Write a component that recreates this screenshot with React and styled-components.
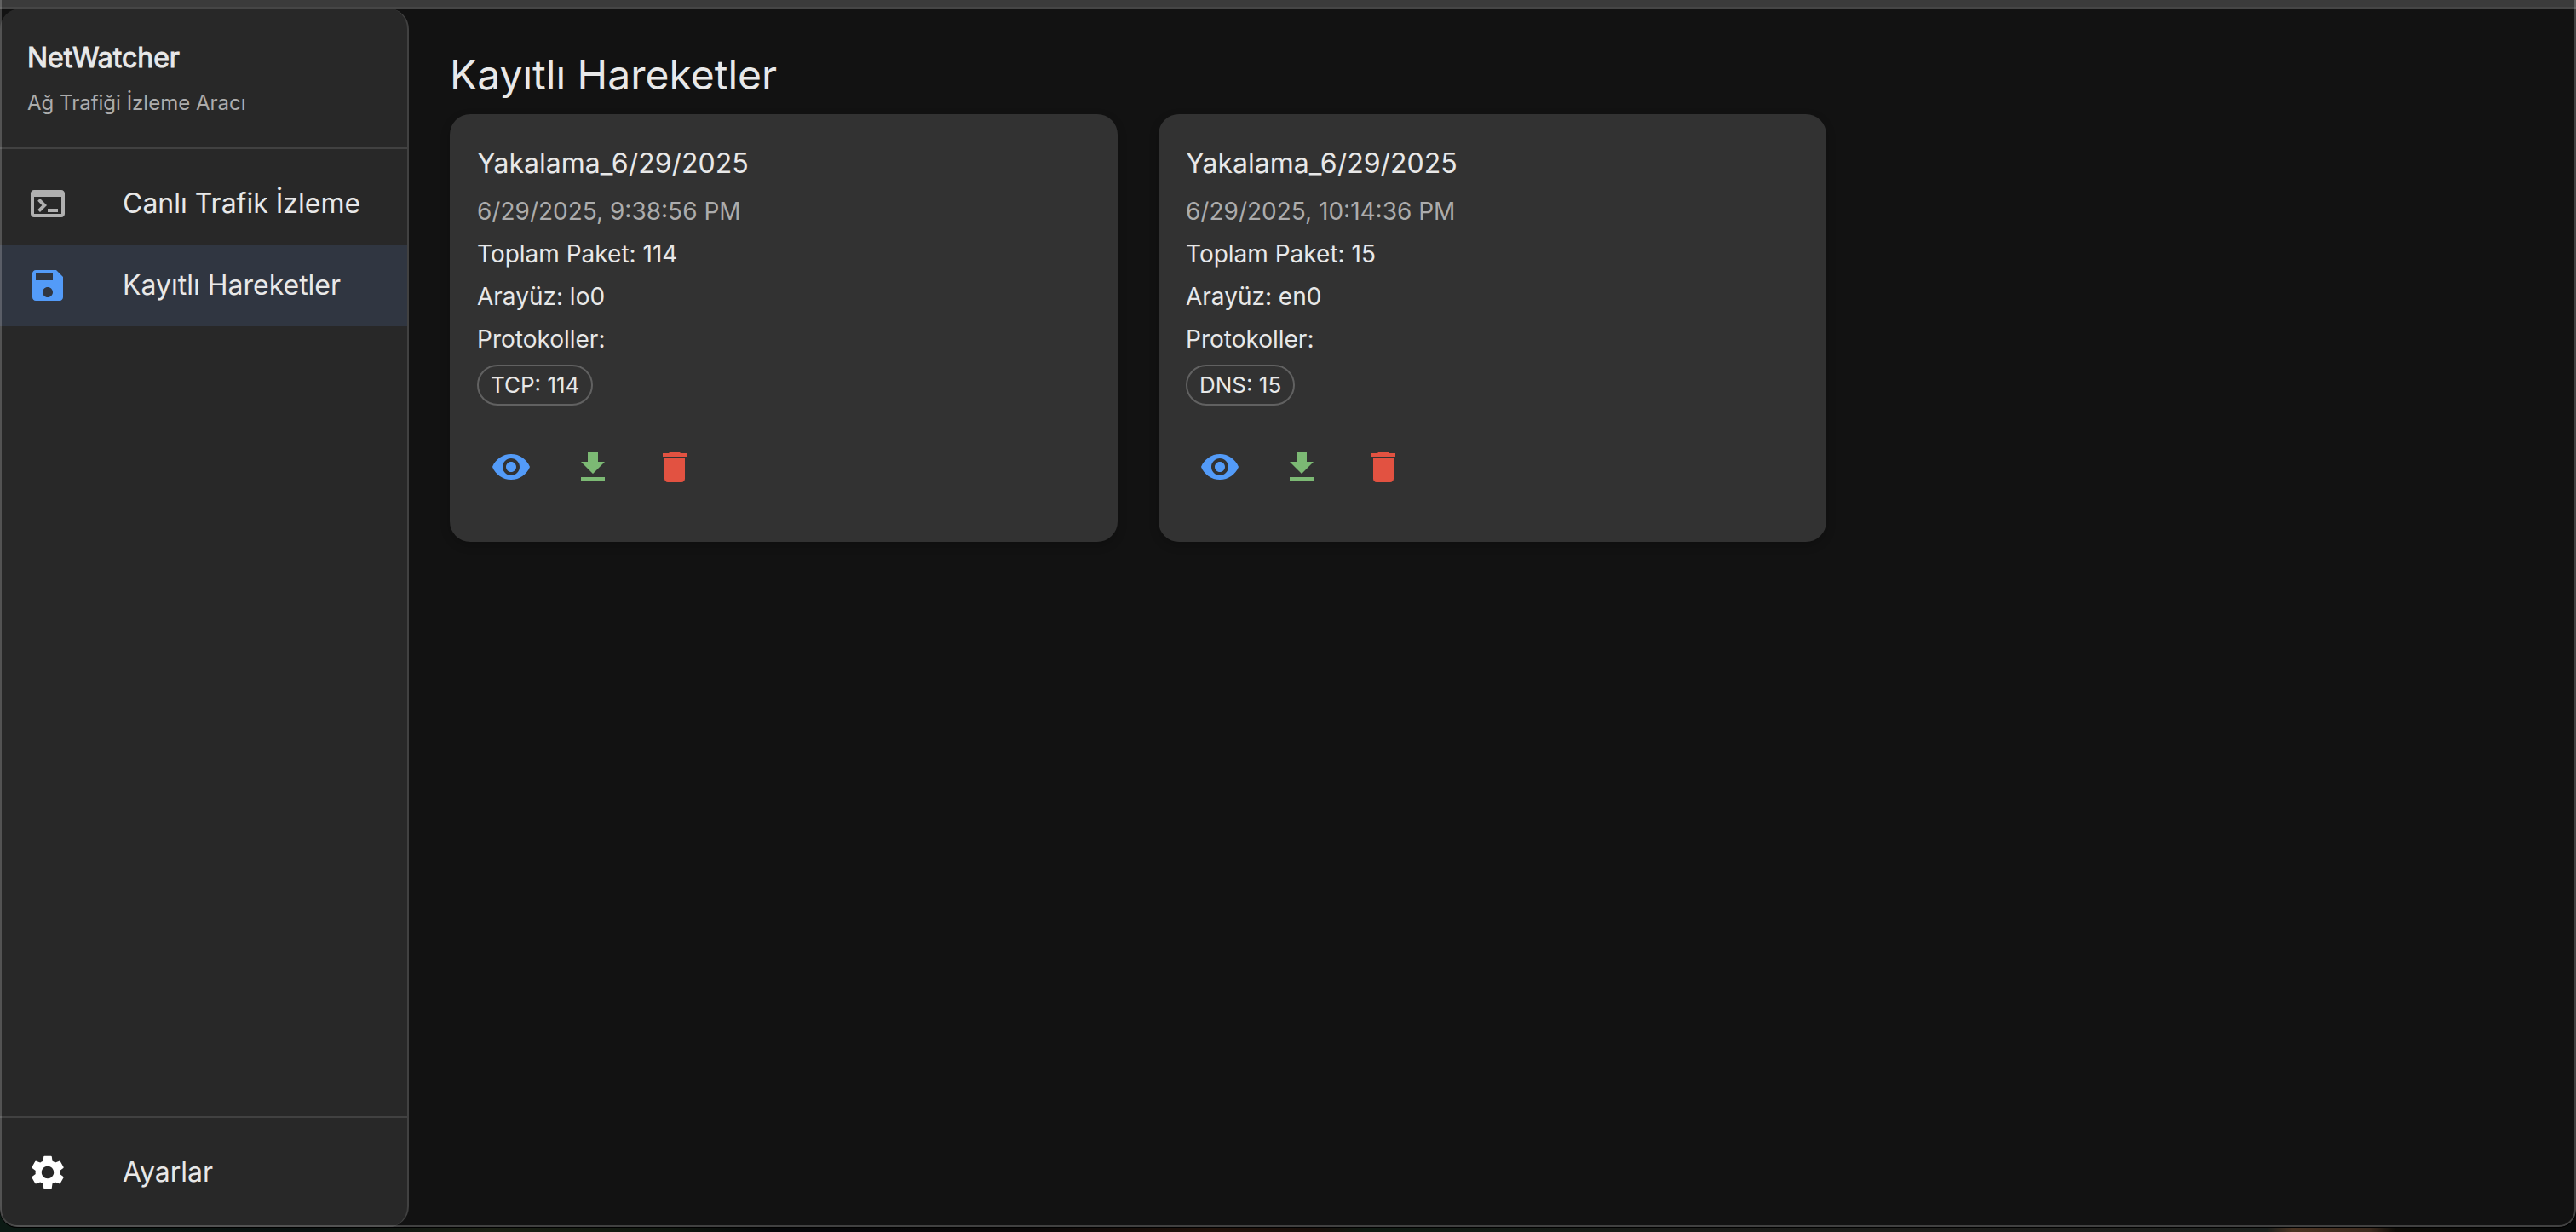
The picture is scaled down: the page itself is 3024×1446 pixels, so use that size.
import React from "react";
import styled, { createGlobalStyle } from "styled-components";

const GlobalStyle = createGlobalStyle`
  * { box-sizing: border-box; }
  body {
    margin: 0;
    background: #0b100e;
    color: #e8e8e8;
    font-family: Inter, "Liberation Sans", sans-serif;
  }
  h1, h2, p, ul { margin: 0; padding: 0; font-weight: 400; }
`;

const Desktop = styled.div`
  height: 100vh;
  padding-bottom: 6px;
  overflow: hidden;
  background: linear-gradient(
    90deg,
    #0c1a14 0%,
    #0a1110 12%,
    #1b2014 19%,
    #10170f 26%,
    #060709 30%,
    #0b0808 40%,
    #22120a 47%,
    #1a0f0a 51%,
    #0f1a12 53%,
    #1a1b18 65%,
    #1d1d1a 80%,
    #1c201d 88%,
    #4a3322 89%,
    #3c2a1e 92%,
    #0e0c07 93%,
    #080a0a 100%
  );
`;

const Window = styled.div`
  height: 100%;
  display: flex;
  flex-direction: column;
  position: relative;
  background: #121212;
  border-radius: 0 0 20px 20px;
  box-shadow: 0 1px 0 #000000;
  overflow: hidden;
  &::after {
    content: "";
    position: absolute;
    inset: 0;
    border: 2px solid rgba(255, 255, 255, 0.2);
    border-top: 0;
    border-radius: inherit;
    pointer-events: none;
  }
`;

const TitleBar = styled.div`
  flex: none;
  height: 10px;
  background: #3b3b3b;
  border-bottom: 2px solid #464646;
`;

const Body = styled.div`
  flex: 1;
  min-height: 0;
  display: flex;
`;

const Sidebar = styled.aside`
  flex: none;
  width: 480px;
  display: flex;
  flex-direction: column;
  background: #282828;
  border-right: 2px solid #414141;
  border-radius: 24px;
`;

const Brand = styled.header`
  padding: 32px 32px 32px;
  border-bottom: 2px solid #414141;
`;

const BrandName = styled.h2`
  font-size: 32px;
  line-height: 51px;
  -webkit-text-stroke: 1px currentColor;
`;

const BrandNote = styled.p`
  font-size: 24px;
  line-height: 40px;
  padding-top: 8px;
  color: #acacac;
`;

const Nav = styled.nav`
  flex: 1;
  padding: 16px 0;
`;

const NavFooter = styled.nav`
  padding: 16px 0;
  border-top: 2px solid #414141;
`;

const NavLink = styled.a`
  display: flex;
  align-items: center;
  height: 96px;
  padding: 0 32px;
  font-size: 32px;
  line-height: 48px;
  color: #e8e8e8;
  text-decoration: none;
  white-space: nowrap;
  background: ${(p) => (p.$active ? "#303641" : "transparent")};
  svg {
    flex: none;
    margin-right: 64px;
    color: ${(p) => p.$iconColor};
  }
`;

const Main = styled.main`
  flex: 1;
  min-width: 0;
  padding: 48px;
`;

const PageTitle = styled.h1`
  font-size: 48px;
  line-height: 60px;
  padding-bottom: 16px;
`;

const CardGrid = styled.div`
  display: grid;
  grid-template-columns: repeat(3, 1fr);
  gap: 48px;
`;

const Card = styled.article`
  padding: 32px 32px 48px;
  background: #323232;
  border-radius: 24px;
  box-shadow: 0 4px 12px rgba(0, 0, 0, 0.2);
`;

const CardTitle = styled.h2`
  font-size: 32px;
  line-height: 52px;
  padding-bottom: 5px;
`;

const CardLine = styled.p`
  font-size: 28px;
  line-height: 50px;
  color: ${(p) => (p.$muted ? "#acacac" : "#e8e8e8")};
`;

const Chips = styled.ul`
  display: flex;
  gap: 8px;
  padding-top: 5px;
  list-style: none;
`;

const Chip = styled.li`
  height: 48px;
  padding: 0 14px;
  font-size: 26px;
  line-height: 44px;
  border: 2px solid #616161;
  border-radius: 24px;
`;

const Actions = styled.div`
  display: flex;
  gap: 16px;
  padding-top: 32px;
`;

const IconButton = styled.button`
  display: flex;
  padding: 16px;
  border: 0;
  border-radius: 50%;
  background: none;
  color: ${(p) => p.$color};
  cursor: pointer;
`;

const PATHS = {
  terminal:
    "M20 4H4c-1.11 0-2 .9-2 2v12c0 1.1.89 2 2 2h16c1.1 0 2-.9 2-2V6c0-1.1-.89-2-2-2m0 14H4V8h16zm-2-1h-6v-2h6zM7.5 17l-1.41-1.41L8.67 13l-2.59-2.59L7.5 9l4 4z",
  save: "M17 3H5c-1.11 0-2 .9-2 2v14c0 1.1.89 2 2 2h14c1.1 0 2-.9 2-2V7zm-5 16c-1.66 0-3-1.34-3-3s1.34-3 3-3 3 1.34 3 3-1.34 3-3 3m3-10H5V5h10z",
  settings:
    "M19.14 12.94c.04-.3.06-.61.06-.94 0-.32-.02-.64-.07-.94l2.03-1.58c.18-.14.23-.41.12-.61l-1.92-3.32c-.12-.22-.37-.29-.59-.22l-2.39.96c-.5-.38-1.03-.7-1.62-.94l-.36-2.54c-.04-.24-.24-.41-.48-.41h-3.84c-.24 0-.43.17-.47.41l-.36 2.54c-.59.24-1.13.57-1.62.94l-2.39-.96c-.22-.08-.47 0-.59.22L2.74 8.87c-.12.21-.08.47.12.61l2.03 1.58c-.05.3-.09.63-.09.94s.02.64.07.94l-2.03 1.58c-.18.14-.23.41-.12.61l1.92 3.32c.12.22.37.29.59.22l2.39-.96c.5.38 1.03.7 1.62.94l.36 2.54c.05.24.24.41.48.41h3.84c.24 0 .44-.17.47-.41l.36-2.54c.59-.24 1.13-.56 1.62-.94l2.39.96c.22.08.47 0 .59-.22l1.92-3.32c.12-.22.07-.47-.12-.61zM12 15.6c-1.98 0-3.6-1.62-3.6-3.6s1.62-3.6 3.6-3.6 3.6 1.62 3.6 3.6-1.62 3.6-3.6 3.6",
  view: "M12 4.5C7 4.5 2.73 7.61 1 12c1.73 4.39 6 7.5 11 7.5s9.27-3.11 11-7.5c-1.73-4.39-6-7.5-11-7.5M12 17c-2.76 0-5-2.24-5-5s2.24-5 5-5 5 2.24 5 5-2.24 5-5 5m0-8c-1.66 0-3 1.34-3 3s1.34 3 3 3 3-1.34 3-3-1.34-3-3-3",
  download: "M19 9h-4V3H9v6H5l7 7zM5 18v2h14v-2z",
  trash:
    "M6 19c0 1.1.9 2 2 2h8c1.1 0 2-.9 2-2V7H6zM19 4h-3.5l-1-1h-5l-1 1H5v2h14z",
};

function Icon({ name }) {
  return (
    <svg width="48" height="48" viewBox="0 0 24 24" fill="currentColor" aria-hidden="true">
      <path d={PATHS[name]} />
    </svg>
  );
}

const captures = [
  {
    id: "lo0",
    name: "Yakalama_6/29/2025",
    date: "6/29/2025, 9:38:56 PM",
    total: 114,
    iface: "lo0",
    protocols: [["TCP", 114]],
  },
  {
    id: "en0",
    name: "Yakalama_6/29/2025",
    date: "6/29/2025, 10:14:36 PM",
    total: 15,
    iface: "en0",
    protocols: [["DNS", 15]],
  },
];

function CaptureCard({ capture }) {
  return (
    <Card>
      <CardTitle>{capture.name}</CardTitle>
      <CardLine $muted>{capture.date}</CardLine>
      <CardLine>{`Toplam Paket: ${capture.total}`}</CardLine>
      <CardLine>{`Arayüz: ${capture.iface}`}</CardLine>
      <CardLine>Protokoller:</CardLine>
      <Chips>
        {capture.protocols.map(([name, count]) => (
          <Chip key={name}>{`${name}: ${count}`}</Chip>
        ))}
      </Chips>
      <Actions>
        <IconButton type="button" $color="#539bf8"><Icon name="view" /></IconButton>
        <IconButton type="button" $color="#7cb974"><Icon name="download" /></IconButton>
        <IconButton type="button" $color="#e25241"><Icon name="trash" /></IconButton>
      </Actions>
    </Card>
  );
}

export default function App() {
  return (
    <Desktop>
      <GlobalStyle />
      <Window>
        <TitleBar />
        <Body>
          <Sidebar>
            <Brand>
              <BrandName>NetWatcher</BrandName>
              <BrandNote>Ağ Trafiği İzleme Aracı</BrandNote>
            </Brand>
            <Nav>
              <NavLink href="#live" $iconColor="#b0b0b0">
                <Icon name="terminal" />
                Canlı Trafik İzleme
              </NavLink>
              <NavLink href="#saved" $active $iconColor="#539bf8">
                <Icon name="save" />
                Kayıtlı Hareketler
              </NavLink>
            </Nav>
            <NavFooter>
              <NavLink href="#settings" $iconColor="#ffffff">
                <Icon name="settings" />
                Ayarlar
              </NavLink>
            </NavFooter>
          </Sidebar>
          <Main>
            <PageTitle>Kayıtlı Hareketler</PageTitle>
            <CardGrid>
              {captures.map((capture) => (
                <CaptureCard key={capture.id} capture={capture} />
              ))}
            </CardGrid>
          </Main>
        </Body>
      </Window>
    </Desktop>
  );
}
